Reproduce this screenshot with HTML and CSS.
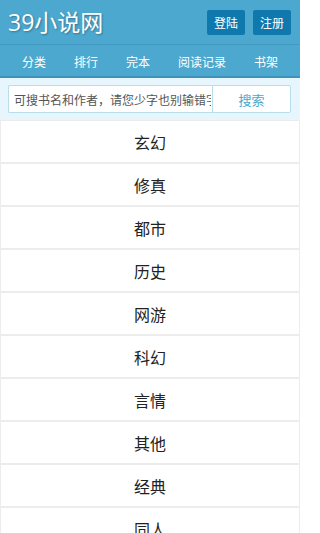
FILE: index.html
```html
<!DOCTYPE html>
<html lang="zh-CN">
<head>
<meta charset="utf-8">
<title>39小说网</title>
<link rel="stylesheet" href="styles.css">
</head>
<body>
<div class="page">
<header class="top">
  <div class="logo">39小说网</div>
  <div class="actions">
    <a class="btn" href="#">登陆</a>
    <a class="btn" href="#">注册</a>
  </div>
</header>
<nav class="nav">
  <a href="#">分类</a>
  <a href="#">排行</a>
  <a href="#">完本</a>
  <a href="#">阅读记录</a>
  <a href="#">书架</a>
</nav>
<form class="search">
  <input class="search-input" type="text" size="1" placeholder="可搜书名和作者，请您少字也别输错字">
  <button class="search-btn" type="button">搜索</button>
</form>
<ul class="cats">
  <li><a href="#">玄幻</a></li>
  <li><a href="#">修真</a></li>
  <li><a href="#">都市</a></li>
  <li><a href="#">历史</a></li>
  <li><a href="#">网游</a></li>
  <li><a href="#">科幻</a></li>
  <li><a href="#">言情</a></li>
  <li><a href="#">其他</a></li>
  <li><a href="#">经典</a></li>
  <li><a href="#">同人</a></li>
</ul>
</div>
</body>
</html>
```

FILE: styles.css
```css
* { box-sizing: border-box; }
html, body {
  margin: 0;
  padding: 0;
  background: #fff;
  font-family: "Noto Sans CJK SC", "Noto Sans", "Liberation Sans", sans-serif;
}
a { text-decoration: none; }
.page { max-width: 300px; overflow: hidden; }

.top {
  height: 45px;
  background: #4ca8cf;
  border-bottom: 1px solid #4199bf;
  display: flex;
  align-items: center;
  justify-content: space-between;
  padding: 0 9px 0 8px;
}
.logo {
  color: #fff;
  font-size: 23px;
  line-height: 1;
  font-family: "Open Sans", "Noto Sans CJK SC", sans-serif;
  text-shadow: 1px 1px 2px rgba(0, 0, 0, 0.3);
  margin-top: 1px;
}
.actions {
  display: flex;
  gap: 8px;
  margin-top: 1px;
}
.btn {
  display: flex;
  align-items: center;
  justify-content: center;
  width: 38px;
  height: 25px;
  border-radius: 2px;
  background: #0f79ad;
  color: #fff;
  font-size: 12px;
}

.nav {
  height: 33px;
  background: #4ca8cf;
  border-bottom: 2px solid #3d93ba;
  display: flex;
  align-items: center;
  padding: 0 8px;
}
.nav a {
  flex: none;
  white-space: nowrap;
  color: #fff;
  font-size: 12px;
  padding: 0 14px;
  line-height: 1;
  margin-top: 2px;
}

.search {
  margin: 0;
  height: 42px;
  background: #e6f6fc;
  display: flex;
  align-items: center;
  padding: 0 9px 0 8px;
}
.search-input {
  flex: 1;
  min-width: 0;
  width: 0;
  height: 28px;
  border: 1px solid #b9dded;
  border-right: none;
  border-radius: 2px 0 0 2px;
  padding: 0 1px 0 5px;
  font-size: 12px;
  font-family: "Noto Sans CJK SC", sans-serif;
  color: #333;
  background: #fff;
  outline: none;
}
.search-input::placeholder { color: #555; }
.search-btn {
  flex: none;
  width: 79px;
  height: 28px;
  border: 1px solid #b9dded;
  border-radius: 0 2px 2px 0;
  background: #fff;
  color: #4ca8cf;
  font-size: 13px;
  font-family: "Noto Sans CJK SC", sans-serif;
  padding: 0;
}

.cats {
  list-style: none;
  margin: 0;
  padding: 0;
}
.cats li {
  border: 1px solid #ececec;
  height: 43px;
  display: flex;
  align-items: center;
  justify-content: center;
}
.cats a {
  color: #222;
  font-size: 16px;
  line-height: 1;
}
```
